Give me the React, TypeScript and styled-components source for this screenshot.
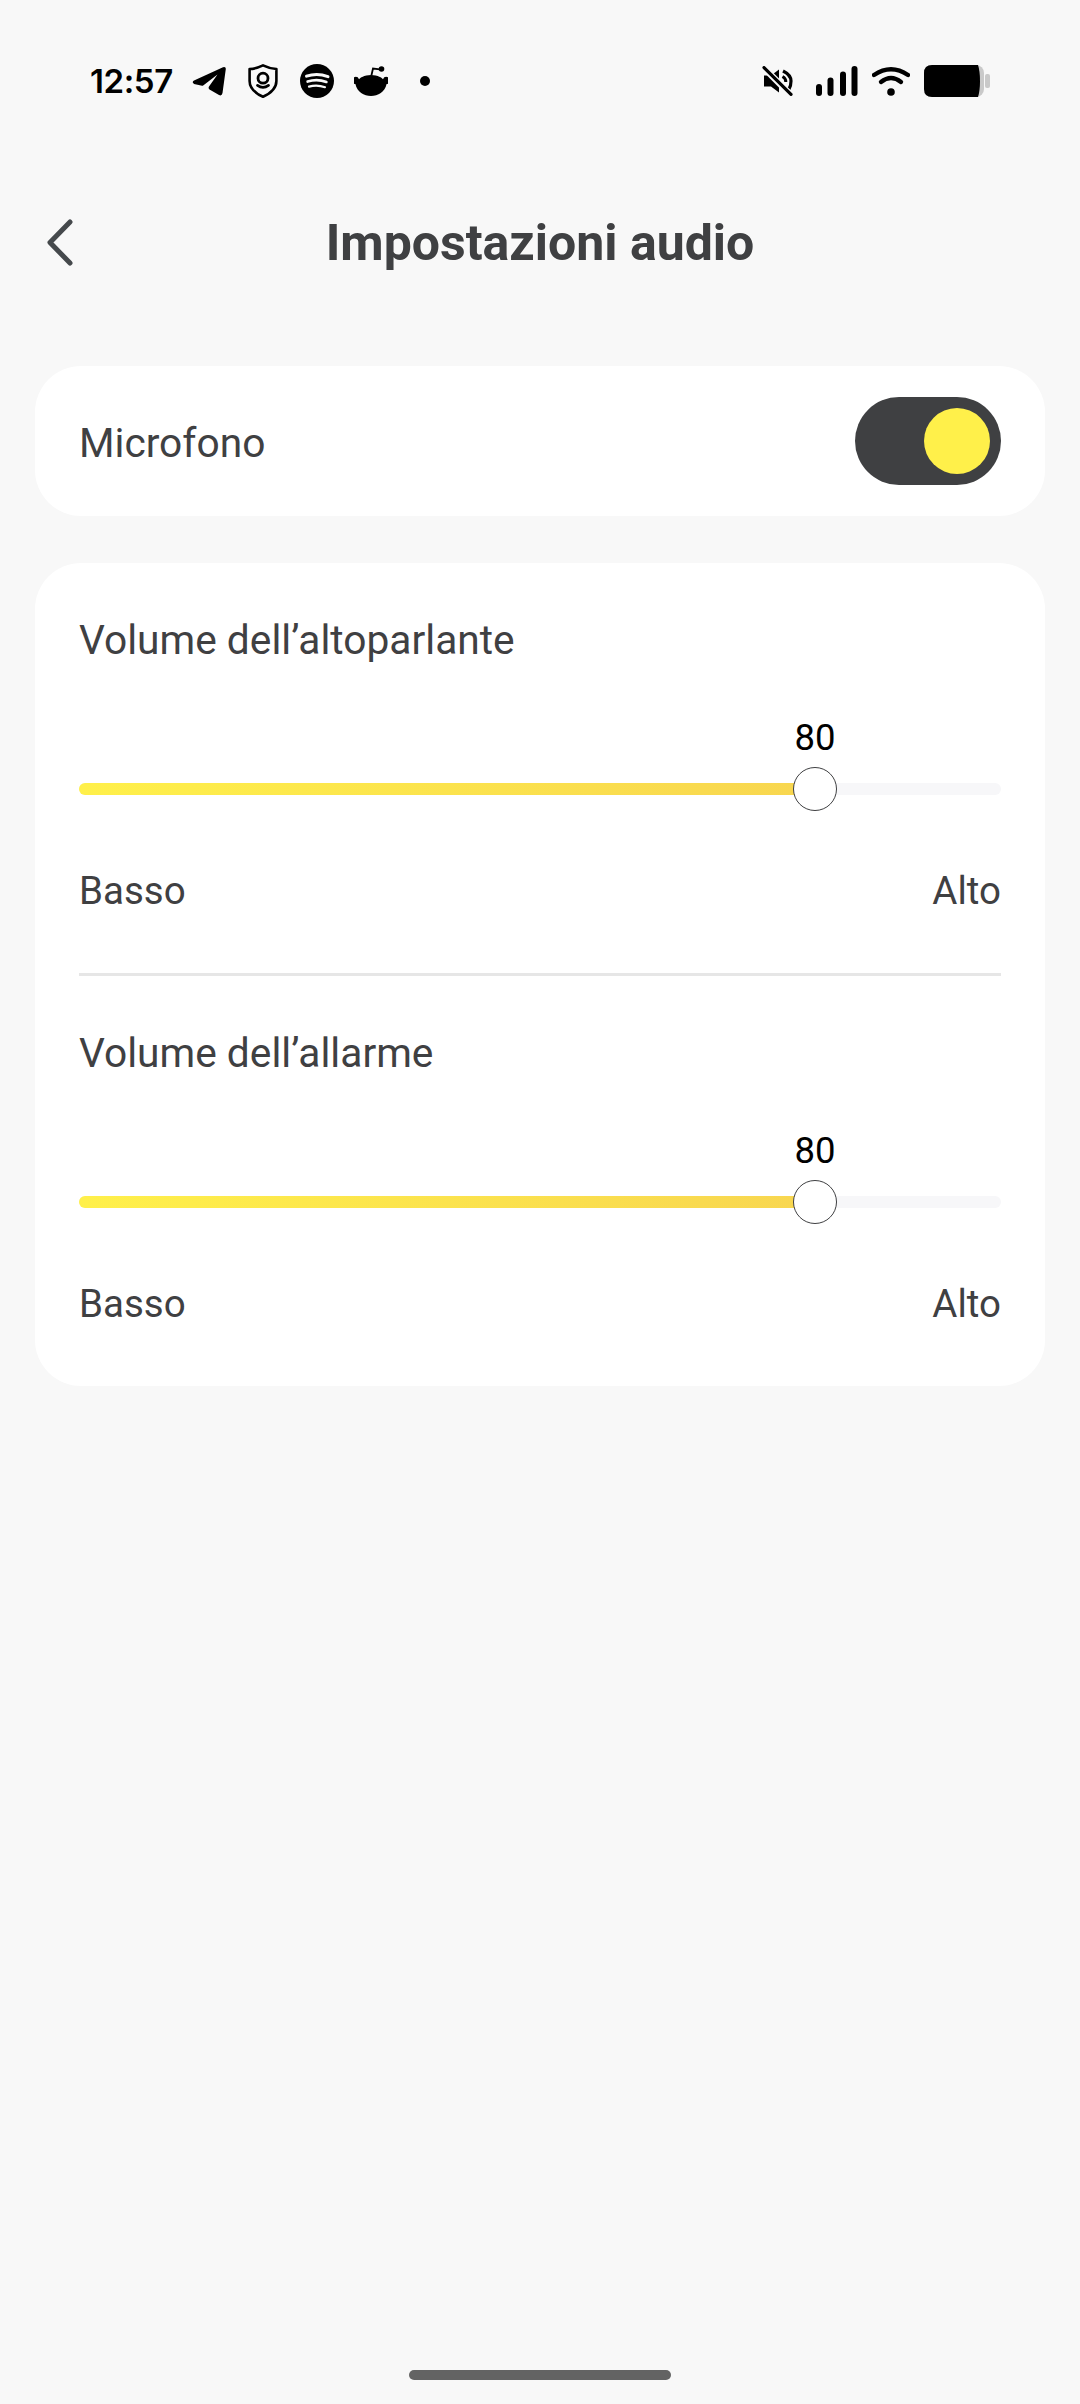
import React from "react";
import styled, { createGlobalStyle } from "styled-components";

const Global = createGlobalStyle`
  html, body { margin: 0; padding: 0; background: #f8f8f8; }
  * { box-sizing: border-box; }
`;

const Page = styled.div`
  width: 1080px;
  height: 2404px;
  background: #f8f8f8;
  font-family: Roboto, "Liberation Sans", sans-serif;
  color: #3f4042;
  display: flex;
  flex-direction: column;
`;

const StatusBar = styled.div`
  height: 203px;
  padding: 64px 90px 0 90px;
  display: flex;
  justify-content: space-between;
  align-items: flex-start;
  color: #000;
`;

const StatusGroup = styled.div<{ $gap: number }>`
  display: flex;
  align-items: center;
  height: 34px;
  gap: ${(p) => p.$gap}px;
`;

const Time = styled.span`
  font-family: Inter, Roboto, sans-serif;
  font-size: 33px;
  font-weight: 600;
  letter-spacing: -0.4px;
  line-height: 34px;
  width: 80px;
  white-space: nowrap;
`;

const Header = styled.header`
  height: 80px;
  display: flex;
  align-items: center;
  justify-content: center;
  position: relative;
`;

const BackButton = styled.button`
  position: absolute;
  left: 44px;
  top: 14px;
  width: 36px;
  height: 52px;
  padding: 0;
  border: 0;
  background: none;
  color: #45494c;
  display: flex;
`;

const Title = styled.h1`
  margin: 0;
  font-size: 50px;
  font-weight: 700;
  color: #3f4042;
  line-height: 80px;
`;

const Cards = styled.main`
  margin-top: 83px;
  padding: 0 35px;
  display: flex;
  flex-direction: column;
  gap: 47px;
`;

const Card = styled.section`
  background: #fff;
  border-radius: 46px;
  padding: 0 44px;
`;

const ToggleRow = styled.div`
  height: 150px;
  display: flex;
  justify-content: space-between;
  align-items: center;
`;

const Label = styled.span`
  font-size: 40.7px;
  line-height: 48px;
  color: #3f4042;
`;

const ToggleLabel = styled(Label)`
  padding-top: 4px;
`;

const RangeLabel = styled.span`
  font-size: 38.5px;
  line-height: 48px;
  color: #3f4042;
`;

const Toggle = styled.div`
  width: 146px;
  height: 88px;
  border-radius: 44px;
  background: #3f4042;
  display: flex;
  align-items: center;
  justify-content: flex-end;
  padding-right: 11px;
`;

const Knob = styled.span`
  width: 66px;
  height: 66px;
  border-radius: 50%;
  background: #fff04a;
`;

const SliderBlock = styled.div<{ $divided?: boolean }>`
  padding: 53px 0 58px;
  border-bottom: ${(p) => (p.$divided ? "3px solid #e6e6e6" : "0")};
`;

const SliderLabelRow = styled.div`
  display: flex;
`;

const SliderArea = styled.div`
  margin-top: 52px;
  height: 95px;
  position: relative;
`;

const ValueText = styled.span`
  position: absolute;
  top: 0;
  transform: translateX(-50%);
  font-size: 36.5px;
  line-height: 44px;
  color: #000;
`;

const Track = styled.div`
  position: absolute;
  left: 0;
  right: 0;
  top: 67px;
  height: 12px;
  border-radius: 6px;
  background: #f7f7f9;
`;

const Fill = styled.div`
  height: 100%;
  border-radius: 6px 0 0 6px;
  background: linear-gradient(90deg, #fff04a 0%, #f8d650 100%);
`;

const Thumb = styled.div`
  position: absolute;
  top: 51px;
  width: 44px;
  height: 44px;
  border-radius: 50%;
  background: #fff;
  border: 1px solid #3f4042;
  transform: translateX(-50%);
`;

const RangeLabels = styled.div`
  margin-top: 56px;
  display: flex;
  justify-content: space-between;
`;

const HomeArea = styled.div`
  margin-top: auto;
  padding-bottom: 24px;
  display: flex;
  justify-content: center;
`;

const HomeBar = styled.div`
  width: 262px;
  height: 10px;
  border-radius: 5px;
  background: #636363;
`;

const Telegram = () => (
  <svg width="34" height="30" viewBox="0 0 34 30">
    <path
      d="M0.8 16.6 Q0.4 15.4 2 14.6 L31 1.2 Q34 0.4 33.8 3 L30.5 27 Q29.8 30.4 27 29 L17.5 23.4 Q16 22 17 20.4 L25.5 8.5 L11.5 19.2 Q10.5 20 9 19.6 L2 18 Z"
      fill="currentColor"
    />
  </svg>
);

const Shield = () => (
  <svg width="30" height="34" viewBox="0 0 30 34" fill="none" stroke="currentColor">
    <path d="M15 1.4 Q22 4.8 28.4 5 V17 Q28.4 26.6 15 32.8 Q1.6 26.6 1.6 17 V5 Q8 4.8 15 1.4 Z" strokeWidth="2.6" strokeLinejoin="round" />
    <circle cx="15" cy="14.2" r="5" strokeWidth="2.8" />
    <path d="M9.5 21.4 Q15 25.4 20.5 21.4" strokeWidth="2.8" strokeLinecap="round" />
  </svg>
);

const Spotify = () => (
  <svg width="34" height="34" viewBox="0 0 34 34">
    <circle cx="17" cy="17" r="17" fill="currentColor" />
    <g fill="none" stroke="#f8f8f8" strokeLinecap="round">
      <path d="M6.5 12.2 Q17 8.4 28 12.6" strokeWidth="3" />
      <path d="M7.6 17.6 Q17 14.4 26.4 18" strokeWidth="2.6" />
      <path d="M9 22.6 Q17 20.2 25 23.2" strokeWidth="2.2" />
    </g>
  </svg>
);

const RedditSvg = styled.svg`
  margin-left: -2px;
`;

const Reddit = () => (
  <RedditSvg width="34" height="30" viewBox="0 0 34 30">
    <path fill="currentColor" d="M17 9 C24 9 28 12 29 13.2 A3.6 3.6 0 1 1 32.6 18 C31 26 24 30 17 30 C10 30 3 26 1.4 18 A3.6 3.6 0 1 1 5 13.2 C6 12 10 9 17 9 Z" />
    <path d="M17.4 9.5 L19 2.6 L26 3.4" stroke="currentColor" strokeWidth="1.8" fill="none" />
    <circle cx="27.5" cy="3" r="2.8" fill="currentColor" />
  </RedditSvg>
);

const Dot = styled.span`
  width: 10px;
  height: 10px;
  border-radius: 50%;
  background: #000;
  margin-left: 10px;
`;

const MuteSvg = styled.svg`
  margin-right: 8px;
`;

const Mute = () => (
  <MuteSvg width="32" height="30" viewBox="0 0 32 30">
    <path d="M2 9.5 H9 L17 3.5 V26.5 L9 20.5 H2 Z" fill="currentColor" />
    <path d="M21 5 Q29 9 29 15 Q29 20 27 23" fill="none" stroke="currentColor" strokeWidth="3.2" />
    <path d="M20.5 10.5 Q24 12.5 23.8 16" fill="none" stroke="currentColor" strokeWidth="3" />
    <path d="M1 1 L31 31" stroke="#f8f8f8" strokeWidth="6.5" />
    <path d="M2 1.6 L29 28.4" stroke="currentColor" strokeWidth="3.2" strokeLinecap="round" />
  </MuteSvg>
);

const Signal = () => (
  <svg width="42" height="30" viewBox="0 0 42 30" fill="currentColor">
    <rect x="0" y="18" width="6" height="12" rx="3" />
    <rect x="11.5" y="11.5" width="6" height="18.5" rx="3" />
    <rect x="24" y="5.5" width="6" height="24.5" rx="3" />
    <rect x="35.5" y="0" width="6" height="30" rx="3" />
  </svg>
);

const Wifi = () => (
  <svg width="38" height="30" viewBox="0 0 38 30" fill="none" stroke="currentColor" strokeLinecap="round">
    <path d="M2 9 Q19 -2.5 36 9" strokeWidth="4.4" />
    <path d="M9 16 Q19 8 29 16" strokeWidth="4.4" />
    <circle cx="19" cy="26" r="3.8" fill="currentColor" stroke="none" />
  </svg>
);

const Battery = () => (
  <svg width="66" height="32" viewBox="0 0 66 32">
    <rect x="0" y="0" width="60" height="32" rx="8" fill="#c9c9c9" />
    <path d="M8 0 H54 Q56 6 56 16 Q56 26 54 32 H8 Q0 32 0 24 V8 Q0 0 8 0 Z" fill="currentColor" />
    <rect x="61" y="9" width="5" height="14" rx="2" fill="#c9c9c9" />
  </svg>
);

const Back = () => (
  <svg width="36" height="52" viewBox="0 0 36 52" fill="none" stroke="currentColor" strokeWidth="5" strokeLinecap="round" strokeLinejoin="round">
    <path d="M26 5 L6 25.5 L26 46" />
  </svg>
);

const THUMB_TRAVEL = 0.998;

const Slider = ({ label, value, divided }: { label: string; value: number; divided?: boolean }) => {
  const position = `${value * THUMB_TRAVEL}%`;
  return (
    <SliderBlock $divided={divided}>
      <SliderLabelRow>
        <Label>{label}</Label>
      </SliderLabelRow>
      <SliderArea>
        <ValueText style={{ left: position }}>{value}</ValueText>
        <Track>
          <Fill style={{ width: position }} />
        </Track>
        <Thumb style={{ left: position }} />
      </SliderArea>
      <RangeLabels>
        <RangeLabel>Basso</RangeLabel>
        <RangeLabel>Alto</RangeLabel>
      </RangeLabels>
    </SliderBlock>
  );
};

export default function App() {
  return (
    <Page>
      <Global />
      <StatusBar>
        <StatusGroup $gap={22}>
          <Time>12:57</Time>
          <Telegram />
          <Shield />
          <Spotify />
          <Reddit />
          <Dot />
        </StatusGroup>
        <StatusGroup $gap={14}>
          <Mute />
          <Signal />
          <Wifi />
          <Battery />
        </StatusGroup>
      </StatusBar>
      <Header>
        <BackButton aria-label="Indietro">
          <Back />
        </BackButton>
        <Title>Impostazioni audio</Title>
      </Header>
      <Cards>
        <Card>
          <ToggleRow>
            <ToggleLabel>Microfono</ToggleLabel>
            <Toggle>
              <Knob />
            </Toggle>
          </ToggleRow>
        </Card>
        <Card>
          <Slider label="Volume dell’altoparlante" value={80} divided />
          <Slider label="Volume dell’allarme" value={80} />
        </Card>
      </Cards>
      <HomeArea>
        <HomeBar />
      </HomeArea>
    </Page>
  );
}
